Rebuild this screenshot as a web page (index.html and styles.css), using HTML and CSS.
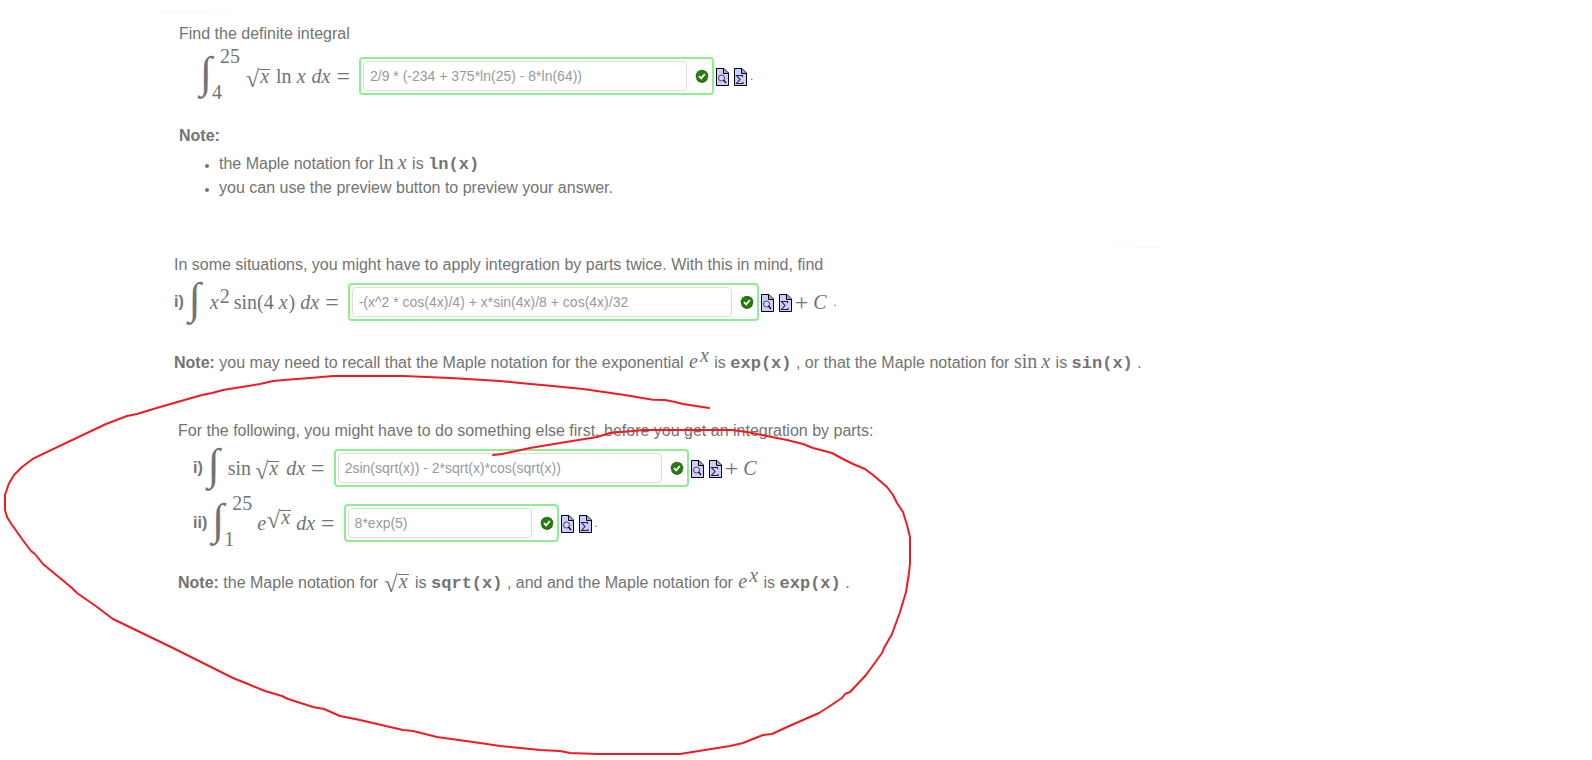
FILE: index.html
```html
<!DOCTYPE html>
<html lang="en">
<head>
<meta charset="utf-8">
<title>Integration by parts</title>
<link rel="stylesheet" href="styles.css">
</head>
<body>
<svg class="defs" aria-hidden="true">
  <symbol id="tick" viewBox="0 0 14 14">
    <circle cx="7" cy="7" r="6.3" fill="#2a7a12"/>
    <path d="M1.6 10A6 6 0 0 0 12.4 10" fill="none" stroke="#1c5a08" stroke-width="1"/>
    <path d="M4 7.200l2.200 2.200 3.600-4.400" fill="none" stroke="#fff" stroke-width="1.800"/>
  </symbol>
  <symbol id="find" viewBox="0 0 13 18">
    <path d="M.5.5h7.500l4.500 4.500v12.500H.5z" fill="#ccf" stroke="#000"/>
    <path d="M7.500 1v4.500H12" fill="#aab" stroke="#000"/>
    <circle cx="5.500" cy="10" r="3" fill="#d8d8ff" stroke="#446" stroke-width="1"/>
    <path d="M7.500 12l2.500 3" stroke="#000" stroke-width="1.200"/>
  </symbol>
  <symbol id="sum" viewBox="0 0 13 18">
    <path d="M.5.5h7.500l4.500 4.500v12.500H.5z" fill="#ccf" stroke="#000"/>
    <path d="M7.500 1v4.500H12" fill="#aab" stroke="#000"/>
    <path d="M8.500 9V7.500H2.500l3.500 4-3.500 4h6.500V14" fill="none" stroke="#224" stroke-width="1.100"/>
  </symbol>
</svg>

<main class="page">
  <section class="part first">
    <p class="line">Find the definite integral</p>
    <div class="equation tall deeper">
      <span class="math"><span class="int">∫</span><span class="limits"><span>25</span><span class="lower">4</span></span><span class="root"><span class="sign">√</span><i class="under">x</i></span><span class="fn">ln</span><i>x</i><i class="dx">dx</i><span class="eq">=</span></span>
      <span class="answer wide"><input type="text" aria-label="Answer: definite integral from 4 to 25" value="2/9 * (-234 + 375*ln(25) - 8*ln(64))"><svg class="tick"><use href="#tick"/></svg></span>
      <button class="tool" aria-label="Preview"><svg><use href="#find"/></svg></button>
      <button class="tool" aria-label="Equation editor"><svg><use href="#sum"/></svg></button><span class="dot">.</span>
    </div>
    <p class="line note"><b>Note:</b></p>
    <ul class="tips">
      <li>the Maple notation for <span class="math">ln<i>x</i></span> is <code>ln(x)</code></li>
      <li>you can use the preview button to preview your answer.</li>
    </ul>
  </section>

  <section class="part second">
    <p class="line">In some situations, you might have to apply integration by parts twice. With this in mind, find</p>
    <div class="equation">
      <b class="item">i)</b>
      <span class="math"><span class="int">∫</span><span><i>x</i><sup>2</sup></span><span class="fn">sin(4</span><i>x</i><span>)</span><i class="dx">dx</i><span class="eq">=</span></span>
      <span class="answer wider"><input type="text" aria-label="Answer i: x squared sin 4x" value="-(x^2 * cos(4x)/4) + x*sin(4x)/8 + cos(4x)/32"><svg class="tick"><use href="#tick"/></svg></span>
      <button class="tool" aria-label="Preview"><svg><use href="#find"/></svg></button>
      <button class="tool" aria-label="Equation editor"><svg><use href="#sum"/></svg></button>
      <span class="math const"><span class="plus">+</span><i>C</i></span><span class="dot apart">.</span>
    </div>
    <p class="line note"><b>Note:</b> you may need to recall that the Maple notation for the exponential <span class="math"><i class="e">e</i><sup><i>x</i></sup></span> is <code>exp(x)</code> , or that the Maple notation for <span class="math">sin<i>x</i></span> is <code>sin(x)</code> .</p>
  </section>

  <section class="part third">
    <p class="line">For the following, you might have to do something else first, before you get an integration by parts:</p>
    <div class="equation deep">
      <b class="item">i)</b>
      <span class="math"><span class="int">∫</span><span>sin</span><span class="root spaced"><span class="sign">√</span><i class="under">x</i></span><i class="dx">dx</i><span class="eq">=</span></span>
      <span class="answer wide"><input type="text" aria-label="Answer i: sin of root x" value="2sin(sqrt(x)) - 2*sqrt(x)*cos(sqrt(x))"><svg class="tick"><use href="#tick"/></svg></span>
      <button class="tool" aria-label="Preview"><svg><use href="#find"/></svg></button>
      <button class="tool" aria-label="Equation editor"><svg><use href="#sum"/></svg></button>
      <span class="math const"><span class="plus">+</span><i>C</i></span>
    </div>
    <div class="equation tall deep">
      <b class="item">ii)</b>
      <span class="math"><span class="int">∫</span><span class="limits"><span>25</span><span class="lower">1</span></span><i class="e">e</i><span class="root raised"><span class="sign">√</span><i class="under">x</i></span><i class="dx">dx</i><span class="eq">=</span></span>
      <span class="answer"><input type="text" aria-label="Answer ii: definite integral from 1 to 25" value="8*exp(5)"><svg class="tick"><use href="#tick"/></svg></span>
      <button class="tool" aria-label="Preview"><svg><use href="#find"/></svg></button>
      <button class="tool" aria-label="Equation editor"><svg><use href="#sum"/></svg></button><span class="dot">.</span>
    </div>
    <p class="line note"><b>Note:</b> the Maple notation for <span class="math"><span class="root"><span class="sign">√</span><i class="under">x</i></span></span> is <code>sqrt(x)</code> , and and the Maple notation for <span class="math"><i class="e">e</i><sup><i>x</i></sup></span> is <code>exp(x)</code> .</p>
  </section>
</main>

<svg class="pen" width="1592" height="760" viewBox="0 0 1592 760" aria-hidden="true">
  <path d="M709 408L683 404 675 402 665 400 653 399.700 623 394.700 583 389 550 385.700 520 383 500 381 450 378 427 377 403 376 333 376 313 377.700 287 379.700 273 381 260 384 237 387.700 223 390 212 393 202 395 160 407 137 414 127 416 106 424 33 458.700 22 467 14 475 8.700 484 5 495V510L7 517 10.700 523 22.700 540 31 551 35 554 43 564 72 588 77 593 97 607 113 619 173 648 233 678 248 684 265 691 282 696 288 699 313 707 324 709 340 716 360 720 403 730 413 731 437 737 480 743 500 746 540 750 560 751 570 753 597 754H680L730 746 743 743 763 735 772 734 787 727 819 713 830 706 842 698 845 694 850 692 866 675 882 653 884 648 892 634 896 623 900 612 906 592 909 573 910 563V537L907 525 903 512 897 503 893 495 887 487 873 475 865 469 853 464 843 459 832 453 813 448 803 444 787 440 767 436 747 432 732 430H643L633 431 610 433 597 437 560 443 530 448 502 454 493 455"/>
</svg>
</body>
</html>
```

FILE: styles.css
```css
* { box-sizing: border-box; }

body {
  margin: 0;
  background: #fff;
  color: #737373;
  font: 16px/24px "Liberation Sans", Arial, sans-serif;
}

.defs { position: absolute; width: 0; height: 0; }

.page {
  padding: 22px 24px 24px 174px;
  background:
    linear-gradient(90deg, #f9f9f9, #fff) 162px 11px / 110px 2px no-repeat,
    linear-gradient(90deg, #fff, #fafafa) 1080px 246px / 80px 2px no-repeat;
}

.first { padding-left: 5px; }
.second { margin-top: 53px; }
.third { margin-top: 44px; padding-left: 4px; }

.line { margin: 0; white-space: nowrap; }
.note { margin-top: 18px; }
.second .note { margin-top: 24px; }

/* Equation rows */
.equation { display: flex; align-items: center; height: 50px; }
.tall { height: 60px; }
.deep { padding-left: 15px; }
.deeper { padding-left: 21px; }
.item { margin-right: 5px; }

.math {
  font-family: "Liberation Serif", "Times New Roman", serif;
  font-size: 20px;
  line-height: 20px;
}
.math i { padding: 0 1px; }
.math sup { font-size: 20px; line-height: 0; vertical-align: 6px; }
.equation > .math { display: flex; align-items: center; }
.line .math i, .tips .math i { margin-left: 3px; }
.line .math .e, .line .math sup i, .line .math .under { margin-left: 0; }

.int {
  width: 20px;
  padding-bottom: 6px;
  font-size: 44px;
  line-height: 44px;
  font-style: italic;
}
.limits {
  display: flex;
  flex-direction: column;
  gap: 16px;
  width: 24px;
  padding-bottom: 4px;
}
.lower { margin-left: -8px; }
.equation .fn { margin: 0 4px; }
.equation .dx { margin-left: 4px; }
.eq { margin: 0 9px 0 5px; font-size: 24px; }

.root { margin: 0 2px; white-space: nowrap; }
.sign { font-size: 24px; line-height: 0; vertical-align: -4px; }
.under { display: inline-block; border-top: 1px solid; line-height: 12px; }
.spaced { margin-left: 4px; }
.raised { margin: 0; padding-bottom: 12px; }

/* Answer field */
.answer {
  display: flex;
  align-items: center;
  justify-content: space-between;
  width: 215px;
  height: 38px;
  padding: 0 3px 0 2px;
  border: 2px solid #90ee90;
  border-radius: 4px;
}
.wide { width: 355px; }
.wider { width: 411px; }
.answer input {
  flex: 1;
  min-width: 0;
  height: 30px;
  margin-right: 8px;
  padding: 0 6px;
  border: 1px solid #ddd;
  border-radius: 4px;
  background: #fff;
  color: #999;
  font: 14px "Liberation Sans", Arial, sans-serif;
}
.tick { width: 14px; height: 14px; }

.tool {
  width: 13px;
  height: 18px;
  margin: 2px 3px 0 2px;
  padding: 0;
  border: 0;
  background: none;
}
.tool svg { display: block; width: 13px; height: 18px; }
.dot { font-size: 12px; }
.apart { margin-left: 6px; }
.const { gap: 4px; }
.plus { font-size: 24px; }

/* Notes */
.tips { margin: 4px 0 0; padding-left: 40px; }
.tips li::marker { font-size: 12px; }
code { font: bold 17px "Liberation Mono", "Courier New", monospace; line-height: 20px; }

.pen { position: absolute; top: 0; left: 0; pointer-events: none; }
.pen path {
  fill: none;
  stroke: #ed1c24;
  stroke-width: 2;
  stroke-linejoin: round;
  stroke-linecap: round;
}
```
